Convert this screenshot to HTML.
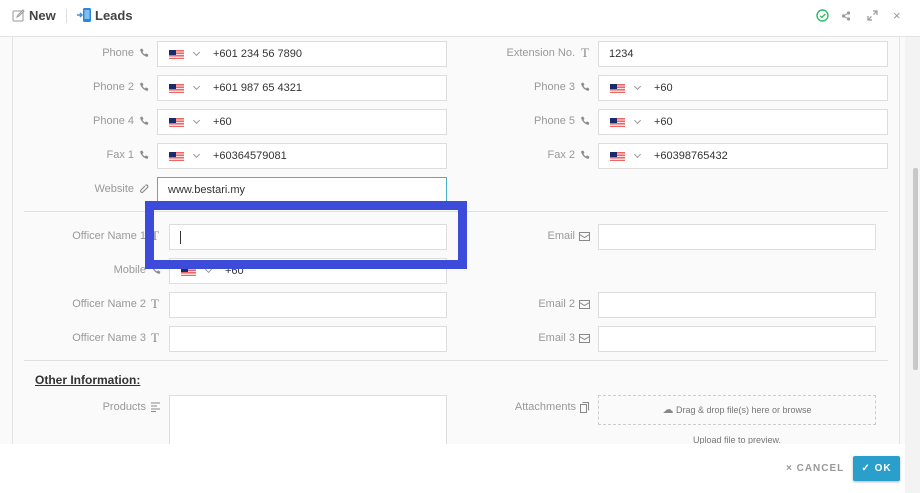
<!DOCTYPE html>
<html><head><meta charset="utf-8"><style>
*{box-sizing:border-box;margin:0;padding:0}
body{width:920px;height:493px;overflow:hidden;background:#fff;font-family:"Liberation Sans",sans-serif;position:relative;color:#333}
.abs{position:absolute}
.hdr{left:0;top:0;width:920px;height:37px;background:#fff;border-bottom:1px solid #e3e3e3}
.content{left:0;top:37px;width:905px;height:407px;background:#fafafa;overflow:hidden}
.lbl{font-size:11px;color:#999;text-align:right;white-space:nowrap}
.inp{background:#fff;border:1px solid #ddd;height:26px;font-size:11px;color:#333;padding-left:10px;line-height:24px}
.flag{display:inline-block;width:15px;height:9px;vertical-align:middle;background:repeating-linear-gradient(#e66 0 1.3px,#fbdede 1.3px 2.6px);position:relative;margin-left:1px}
.flag:before{content:"";position:absolute;left:0;top:0;width:7px;height:5px;background:#1a2a6a}
.chev{display:inline-block;width:5px;height:5px;border-right:1px solid #999;border-bottom:1px solid #999;transform:rotate(45deg);margin:0 14px 3px 10px;vertical-align:middle}
.ico{font-size:11px;color:#888}
.ph{position:absolute;width:10px;height:10px}
</style></head><body>
<svg width="0" height="0" style="position:absolute"><defs><symbol id="p" viewBox="0 0 10 10"><path d="M1.2 1.2l2-.7 1.3 2.4-1.1 1c.5 1.1 1.4 2 2.6 2.6l1-1.1 2.4 1.3-.7 2C5.5 9 1 4.5 1.2 1.2z" fill="#8a8a8a"/></symbol></defs></svg>
<div class="abs hdr">
 <svg class="abs" style="left:12px;top:9px" width="13" height="13" viewBox="0 0 13 13"><rect x="1" y="2" width="10" height="10" fill="none" stroke="#999" rx="1"/><path d="M5 8l1-2 5-5 1 1-5 5z" fill="#fff" stroke="#999"/></svg>
 <div class="abs" style="left:29px;top:8px;font-size:13px;font-weight:bold;color:#444">New</div>
 <div class="abs" style="left:66px;top:9px;width:1px;height:14px;background:#ddd"></div>
 <svg class="abs" style="left:77px;top:7px" width="15" height="16" viewBox="0 0 15 16"><path d="M0 8h5M3 6l2 2-2 2" stroke="#3a8fd8" stroke-width="1.5" fill="none"/><rect x="6" y="1" width="8" height="14" rx="1.5" fill="#2d86d6"/><rect x="7.5" y="3" width="5" height="9" fill="#7fc0f0"/></svg>
 <div class="abs" style="left:95px;top:8px;font-size:13px;font-weight:bold;color:#444">Leads</div>
 <svg class="abs" style="left:816px;top:9px" width="13" height="13" viewBox="0 0 13 13"><circle cx="6.5" cy="6.5" r="5.5" fill="none" stroke="#2ebd6b" stroke-width="1.4"/><path d="M4 6.7l1.8 1.8L9.2 5" fill="none" stroke="#2ebd6b" stroke-width="1.3"/></svg>
 <svg class="abs" style="left:841px;top:11px" width="10" height="10" viewBox="0 0 10 10"><circle cx="7.5" cy="2" r="1.6" fill="#999"/><circle cx="2.5" cy="5" r="1.6" fill="#999"/><circle cx="7.5" cy="8" r="1.6" fill="#999"/><path d="M7.5 2L2.5 5 7.5 8" stroke="#999" fill="none"/></svg>
 <svg class="abs" style="left:867px;top:10px" width="11" height="11" viewBox="0 0 11 11"><path d="M6 1h4v4M10 1L6.5 4.5M5 10H1V6M1 10l3.5-3.5" stroke="#999" fill="none" stroke-width="1.2"/></svg>
 <div class="abs" style="left:893px;top:8px;font-size:13px;color:#999">×</div>
</div>
<div class="abs content">
 <div class="abs" style="left:12px;top:0;width:1px;height:407px;background:#e3e3e3"></div>
 <div class="abs" style="left:899px;top:0;width:1px;height:407px;background:#e3e3e3"></div>
</div>
<div class="abs" style="left:905px;top:37px;width:15px;height:456px;background:#f3f3f3"></div>
<div class="abs" style="left:913px;top:168px;width:5px;height:202px;background:#c8c8c8;border-radius:2px"></div>

<div class="abs lbl" style="left:40px;top:47px;width:94px">Phone</div>
<div class="abs lbl" style="left:40px;top:81px;width:94px">Phone 2</div>
<div class="abs lbl" style="left:40px;top:115px;width:94px">Phone 4</div>
<div class="abs lbl" style="left:40px;top:149px;width:94px">Fax 1</div>
<div class="abs lbl" style="left:40px;top:183px;width:94px">Website</div>
<svg class="ph" style="left:139px;top:48px"><use href="#p"/></svg>
<svg class="ph" style="left:139px;top:82px"><use href="#p"/></svg>
<svg class="ph" style="left:139px;top:116px"><use href="#p"/></svg>
<svg class="ph" style="left:139px;top:150px"><use href="#p"/></svg>
<svg class="abs" style="left:139px;top:184px" width="10" height="10" viewBox="0 0 10 10"><path d="M6.5 1.5a1.4 1.4 0 012 2L4 8a1.4 1.4 0 01-2-2l4-4" fill="none" stroke="#888" stroke-width="1.1"/></svg>
<div class="abs inp" style="left:157px;top:41px;width:290px"><span class="flag"></span><span class="chev"></span>+601 234 56 7890</div>
<div class="abs inp" style="left:157px;top:75px;width:290px"><span class="flag"></span><span class="chev"></span>+601 987 65 4321</div>
<div class="abs inp" style="left:157px;top:109px;width:290px"><span class="flag"></span><span class="chev"></span>+60</div>
<div class="abs inp" style="left:157px;top:143px;width:290px"><span class="flag"></span><span class="chev"></span>+60364579081</div>
<div class="abs inp" style="left:157px;top:177px;width:290px;border-color:#4ab0cc">www.bestari.my</div>

<div class="abs lbl" style="left:470px;top:47px;width:105px">Extension No.</div>
<div class="abs lbl" style="left:470px;top:81px;width:105px">Phone 3</div>
<div class="abs lbl" style="left:470px;top:115px;width:105px">Phone 5</div>
<div class="abs lbl" style="left:470px;top:149px;width:105px">Fax 2</div>
<div class="abs ico" style="left:581px;top:45px;font-family:'Liberation Serif';font-size:13px">T</div>
<svg class="ph" style="left:580px;top:82px"><use href="#p"/></svg>
<svg class="ph" style="left:580px;top:116px"><use href="#p"/></svg>
<svg class="ph" style="left:580px;top:150px"><use href="#p"/></svg>
<div class="abs inp" style="left:598px;top:41px;width:290px">1234</div>
<div class="abs inp" style="left:598px;top:75px;width:290px"><span class="flag"></span><span class="chev"></span>+60</div>
<div class="abs inp" style="left:598px;top:109px;width:290px"><span class="flag"></span><span class="chev"></span>+60</div>
<div class="abs inp" style="left:598px;top:143px;width:290px"><span class="flag"></span><span class="chev"></span>+60398765432</div>

<div class="abs" style="left:24px;top:211px;width:864px;height:1px;background:#e0e0e0"></div>

<div class="abs lbl" style="left:40px;top:230px;width:106px">Officer Name 1</div>
<div class="abs lbl" style="left:40px;top:264px;width:106px">Mobile</div>
<div class="abs lbl" style="left:40px;top:298px;width:106px">Officer Name 2</div>
<div class="abs lbl" style="left:40px;top:332px;width:106px">Officer Name 3</div>
<div class="abs ico" style="left:151px;top:228px;font-family:'Liberation Serif';font-size:13px">T</div>
<svg class="ph" style="left:151px;top:265px"><use href="#p"/></svg>
<div class="abs ico" style="left:151px;top:296px;font-family:'Liberation Serif';font-size:13px">T</div>
<div class="abs ico" style="left:151px;top:330px;font-family:'Liberation Serif';font-size:13px">T</div>
<div class="abs inp" style="left:169px;top:224px;width:278px"><span style="display:inline-block;width:1px;height:13px;background:#333;vertical-align:middle"></span></div>
<div class="abs inp" style="left:169px;top:258px;width:278px"><span class="flag"></span><span class="chev"></span>+60</div>
<div class="abs inp" style="left:169px;top:292px;width:278px"></div>
<div class="abs inp" style="left:169px;top:326px;width:278px"></div>

<div class="abs lbl" style="left:470px;top:230px;width:105px">Email</div>
<div class="abs lbl" style="left:470px;top:298px;width:105px">Email 2</div>
<div class="abs lbl" style="left:470px;top:332px;width:105px">Email 3</div>
<svg class="abs" style="left:579px;top:232px" width="11" height="9"><rect x=".5" y=".5" width="10" height="8" fill="none" stroke="#888"/><path d="M.5 2.5l5 3 5-3" fill="none" stroke="#888"/></svg>
<svg class="abs" style="left:579px;top:300px" width="11" height="9"><rect x=".5" y=".5" width="10" height="8" fill="none" stroke="#888"/><path d="M.5 2.5l5 3 5-3" fill="none" stroke="#888"/></svg>
<svg class="abs" style="left:579px;top:334px" width="11" height="9"><rect x=".5" y=".5" width="10" height="8" fill="none" stroke="#888"/><path d="M.5 2.5l5 3 5-3" fill="none" stroke="#888"/></svg>
<div class="abs inp" style="left:598px;top:224px;width:278px"></div>
<div class="abs inp" style="left:598px;top:292px;width:278px"></div>
<div class="abs inp" style="left:598px;top:326px;width:278px"></div>

<div class="abs" style="left:24px;top:360px;width:864px;height:1px;background:#e0e0e0"></div>
<div class="abs" style="left:35px;top:373px;font-size:12px;font-weight:bold;text-decoration:underline;color:#333">Other Information:</div>

<div class="abs lbl" style="left:40px;top:401px;width:106px">Products</div>
<svg class="abs" style="left:151px;top:402px" width="10" height="10"><path d="M0 1h9M0 4h6M0 7h9M0 9.5h5" stroke="#888"/></svg>
<div class="abs" style="left:169px;top:395px;width:278px;height:60px;background:#fff;border:1px solid #ddd"></div>

<div class="abs lbl" style="left:470px;top:401px;width:106px">Attachments</div>
<svg class="abs" style="left:580px;top:402px" width="9" height="11"><path d="M.5 2.5h6v8h-6z M2.5 .5h6v8" fill="none" stroke="#888"/></svg>
<div class="abs" style="left:598px;top:395px;width:278px;height:30px;border:1px dashed #ccc;font-size:9px;color:#777;text-align:center;line-height:28px"><span style="color:#888;font-size:11px">☁</span> Drag &amp; drop file(s) here or browse</div>
<div class="abs" style="left:598px;top:435px;width:278px;font-size:9px;color:#777;text-align:center">Upload file to preview.</div>

<div class="abs" style="left:0;top:444px;width:905px;height:49px;background:#fff"></div>
<div class="abs" style="left:786px;top:463px;font-size:10px;color:#999;font-weight:bold;letter-spacing:1px">× CANCEL</div>
<div class="abs" style="left:853px;top:456px;width:47px;height:25px;background:#2a9fcb;border-radius:2px;color:#fff;font-size:10px;font-weight:bold;text-align:center;line-height:25px;letter-spacing:1px;box-shadow:0 1px 2px rgba(0,0,0,.3)">✓ OK</div>

<div class="abs" style="left:145px;top:201px;width:322px;height:68px;border:9px solid #3d4bdb"></div>
</body></html>
